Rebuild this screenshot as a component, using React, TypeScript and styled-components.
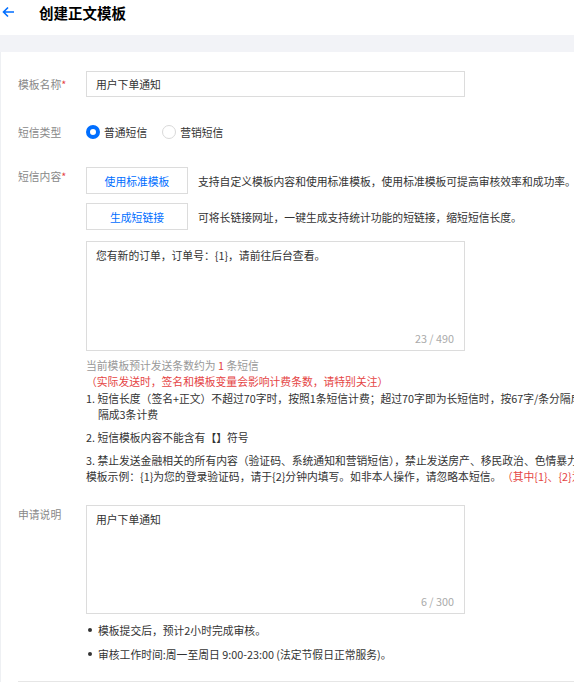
import React from 'react';
import styled, { createGlobalStyle } from 'styled-components';

const GlobalStyle = createGlobalStyle`
    html, body {
        margin: 0;
        padding: 0;
        background: #fff;
        overflow: hidden;
    }
    body {
        font-family: "Noto Sans CJK SC", "Noto Sans", sans-serif;
        font-size: 10.8px;
        color: #333;
    }
`;

const Page = styled.div`
    width: 574px;
    overflow: hidden;
`;

const Header = styled.div`
    display: flex;
    align-items: center;
    height: 24px;
    padding: 0 0 11px 2px;
`;

const BackButton = styled.span`
    display: flex;
    width: 37px;
    color: #006eff;
`;

const Title = styled.h1`
    margin: 0;
    font-size: 14.5px;
    font-weight: 700;
    color: #000;
`;

const Band = styled.div`
    height: 17px;
    background: #f2f3f7;
`;

const Card = styled.div`
    padding: 19px 0 0 17px;
    border-left: 1px solid #eef0f3;
`;

const Row = styled.div<{ $gap?: number }>`
    display: grid;
    grid-template-columns: 68px auto;
    margin-bottom: ${({ $gap }) => $gap ?? 22}px;
`;

const Label = styled.div<{ $top?: boolean }>`
    color: #888;
    line-height: ${({ $top }) => ($top ? '16px' : '26px')};
    padding-top: ${({ $top }) => ($top ? '1px' : '0')};
    white-space: nowrap;

    em {
        font-style: normal;
        color: #e54545;
    }
`;

const Field = styled.div`
    min-width: 0;
`;

const Input = styled.div`
    box-sizing: border-box;
    width: 379px;
    height: 26px;
    line-height: 24px;
    padding: 0 9px;
    border: 1px solid #dcdcdc;
    color: #333;
`;

const RadioGroup = styled.div`
    display: flex;
    align-items: center;
    height: 26px;
    gap: 15px;
`;

const RadioItem = styled.label`
    display: flex;
    align-items: center;
    gap: 4px;
    color: #333;
`;

const RadioDot = styled.span<{ $checked?: boolean }>`
    box-sizing: border-box;
    width: 14px;
    height: 14px;
    border-radius: 50%;
    background: #fff;
    border: ${({ $checked }) =>
        $checked ? '4px solid #006eff' : '1px solid #d9d9d9'};
`;

const ActionRow = styled.div<{ $gap?: number }>`
    display: flex;
    align-items: center;
    margin-bottom: ${({ $gap }) => $gap ?? 9}px;
    white-space: nowrap;
`;

const ActionButton = styled.button`
    box-sizing: border-box;
    flex: none;
    width: 102px;
    height: 27px;
    margin-right: 10px;
    padding: 0;
    border: 1px solid #dcdcdc;
    background: #fff;
    color: #006eff;
    font: inherit;
`;

const ActionText = styled.span`
    color: #333;
`;

const TextArea = styled.div<{ $height: number }>`
    box-sizing: border-box;
    display: flex;
    flex-direction: column;
    justify-content: space-between;
    width: 379px;
    height: ${({ $height }) => $height}px;
    padding: 5px 10px 4px 9px;
    border: 1px solid #dcdcdc;
    line-height: 16px;
    color: #333;
`;

const Counter = styled.span`
    align-self: flex-end;
    color: #aaa;
`;

const Hint = styled.div`
    margin-top: 6px;
    line-height: 16px;
    white-space: nowrap;
`;

const Muted = styled.div`
    color: #999;

    b {
        font-weight: 400;
        color: #e54545;
    }
`;

const Warn = styled.span<{ $offset?: number }>`
    margin-left: ${({ $offset }) => $offset ?? 0}px;
    color: #e54545;
`;

const Rule = styled.div<{ $first?: boolean }>`
    margin-top: ${({ $first }) => ($first ? 1 : 7)}px;
    line-height: 16px;
    white-space: nowrap;
    color: #333;
`;

const Line = styled.div<{ $indent?: boolean }>`
    padding-left: ${({ $indent }) => ($indent ? '12px' : '0')};
`;

const Notes = styled.ul`
    list-style: none;
    margin: 8px 0 0;
    padding: 0 0 0 2px;
    line-height: 16px;
`;

const Note = styled.li`
    display: flex;
    align-items: center;
    gap: 6px;
    margin-bottom: 8px;
    white-space: nowrap;

    &::before {
        content: '';
        width: 4px;
        height: 4px;
        border-radius: 50%;
        background: #333;
    }
`;

const Divider = styled.div`
    margin-top: 11px;
    border-top: 1px solid #e6e6e6;
`;

const ArrowLeft = () => (
    <svg width="13" height="12" viewBox="0 0 13 12" fill="none">
        <path
            d="M12 6H1.5M6 1.5L1.5 6L6 10.5"
            stroke="currentColor"
            strokeWidth="1.6"
        />
    </svg>
);

const App = () => {
    return (
        <Page>
            <GlobalStyle />
            <Header>
                <BackButton>
                    <ArrowLeft />
                </BackButton>
                <Title>创建正文模板</Title>
            </Header>
            <Band />
            <Card>
                <Row>
                    <Label>
                        模板名称<em>*</em>
                    </Label>
                    <Field>
                        <Input>用户下单通知</Input>
                    </Field>
                </Row>
                <Row>
                    <Label>短信类型</Label>
                    <RadioGroup>
                        <RadioItem>
                            <RadioDot $checked />
                            普通短信
                        </RadioItem>
                        <RadioItem>
                            <RadioDot />
                            营销短信
                        </RadioItem>
                    </RadioGroup>
                </Row>
                <Row $gap={21}>
                    <Label $top>
                        短信内容<em>*</em>
                    </Label>
                    <Field>
                        <ActionRow>
                            <ActionButton>使用标准模板</ActionButton>
                            <ActionText>
                                支持自定义模板内容和使用标准模板，使用标准模板可提高审核效率和成功率。
                            </ActionText>
                        </ActionRow>
                        <ActionRow $gap={11}>
                            <ActionButton>生成短链接</ActionButton>
                            <ActionText>
                                可将长链接网址，一键生成支持统计功能的短链接，缩短短信长度。
                            </ActionText>
                        </ActionRow>
                        <TextArea $height={110}>
                            <span>您有新的订单，订单号：{'{1}'}，请前往后台查看。</span>
                            <Counter>23 / 490</Counter>
                        </TextArea>
                        <Hint>
                            <Muted>
                                当前模板预计发送条数约为 <b>1</b> 条短信
                            </Muted>
                            <Warn>（实际发送时，签名和模板变量会影响计费条数，请特别关注）</Warn>
                        </Hint>
                        <Rule $first>
                            <Line>
                                1. 短信长度（签名+正文）不超过70字时，按照1条短信计费；超过70字即为长短信时，按67字/条分隔成多条计费
                            </Line>
                            <Line $indent>隔成3条计费</Line>
                        </Rule>
                        <Rule>
                            <Line>2. 短信模板内容不能含有【】符号</Line>
                        </Rule>
                        <Rule>
                            <Line>
                                3. 禁止发送金融相关的所有内容（验证码、系统通知和营销短信），禁止发送房产、移民政治、色情暴力等内容
                            </Line>
                            <Line>
                                模板示例：{'{1}'}为您的登录验证码，请于{'{2}'}分钟内填写。如非本人操作，请忽略本短信。
                                <Warn $offset={6}>（其中{'{1}'}、{'{2}'}为变量）</Warn>
                            </Line>
                        </Rule>
                    </Field>
                </Row>
                <Row $gap={0}>
                    <Label $top>申请说明</Label>
                    <Field>
                        <TextArea $height={109}>
                            <span>用户下单通知</span>
                            <Counter>6 / 300</Counter>
                        </TextArea>
                        <Notes>
                            <Note>模板提交后，预计2小时完成审核。</Note>
                            <Note>审核工作时间:周一至周日 9:00-23:00 (法定节假日正常服务)。</Note>
                        </Notes>
                    </Field>
                </Row>
                <Divider />
            </Card>
        </Page>
    );
};

export default App;
